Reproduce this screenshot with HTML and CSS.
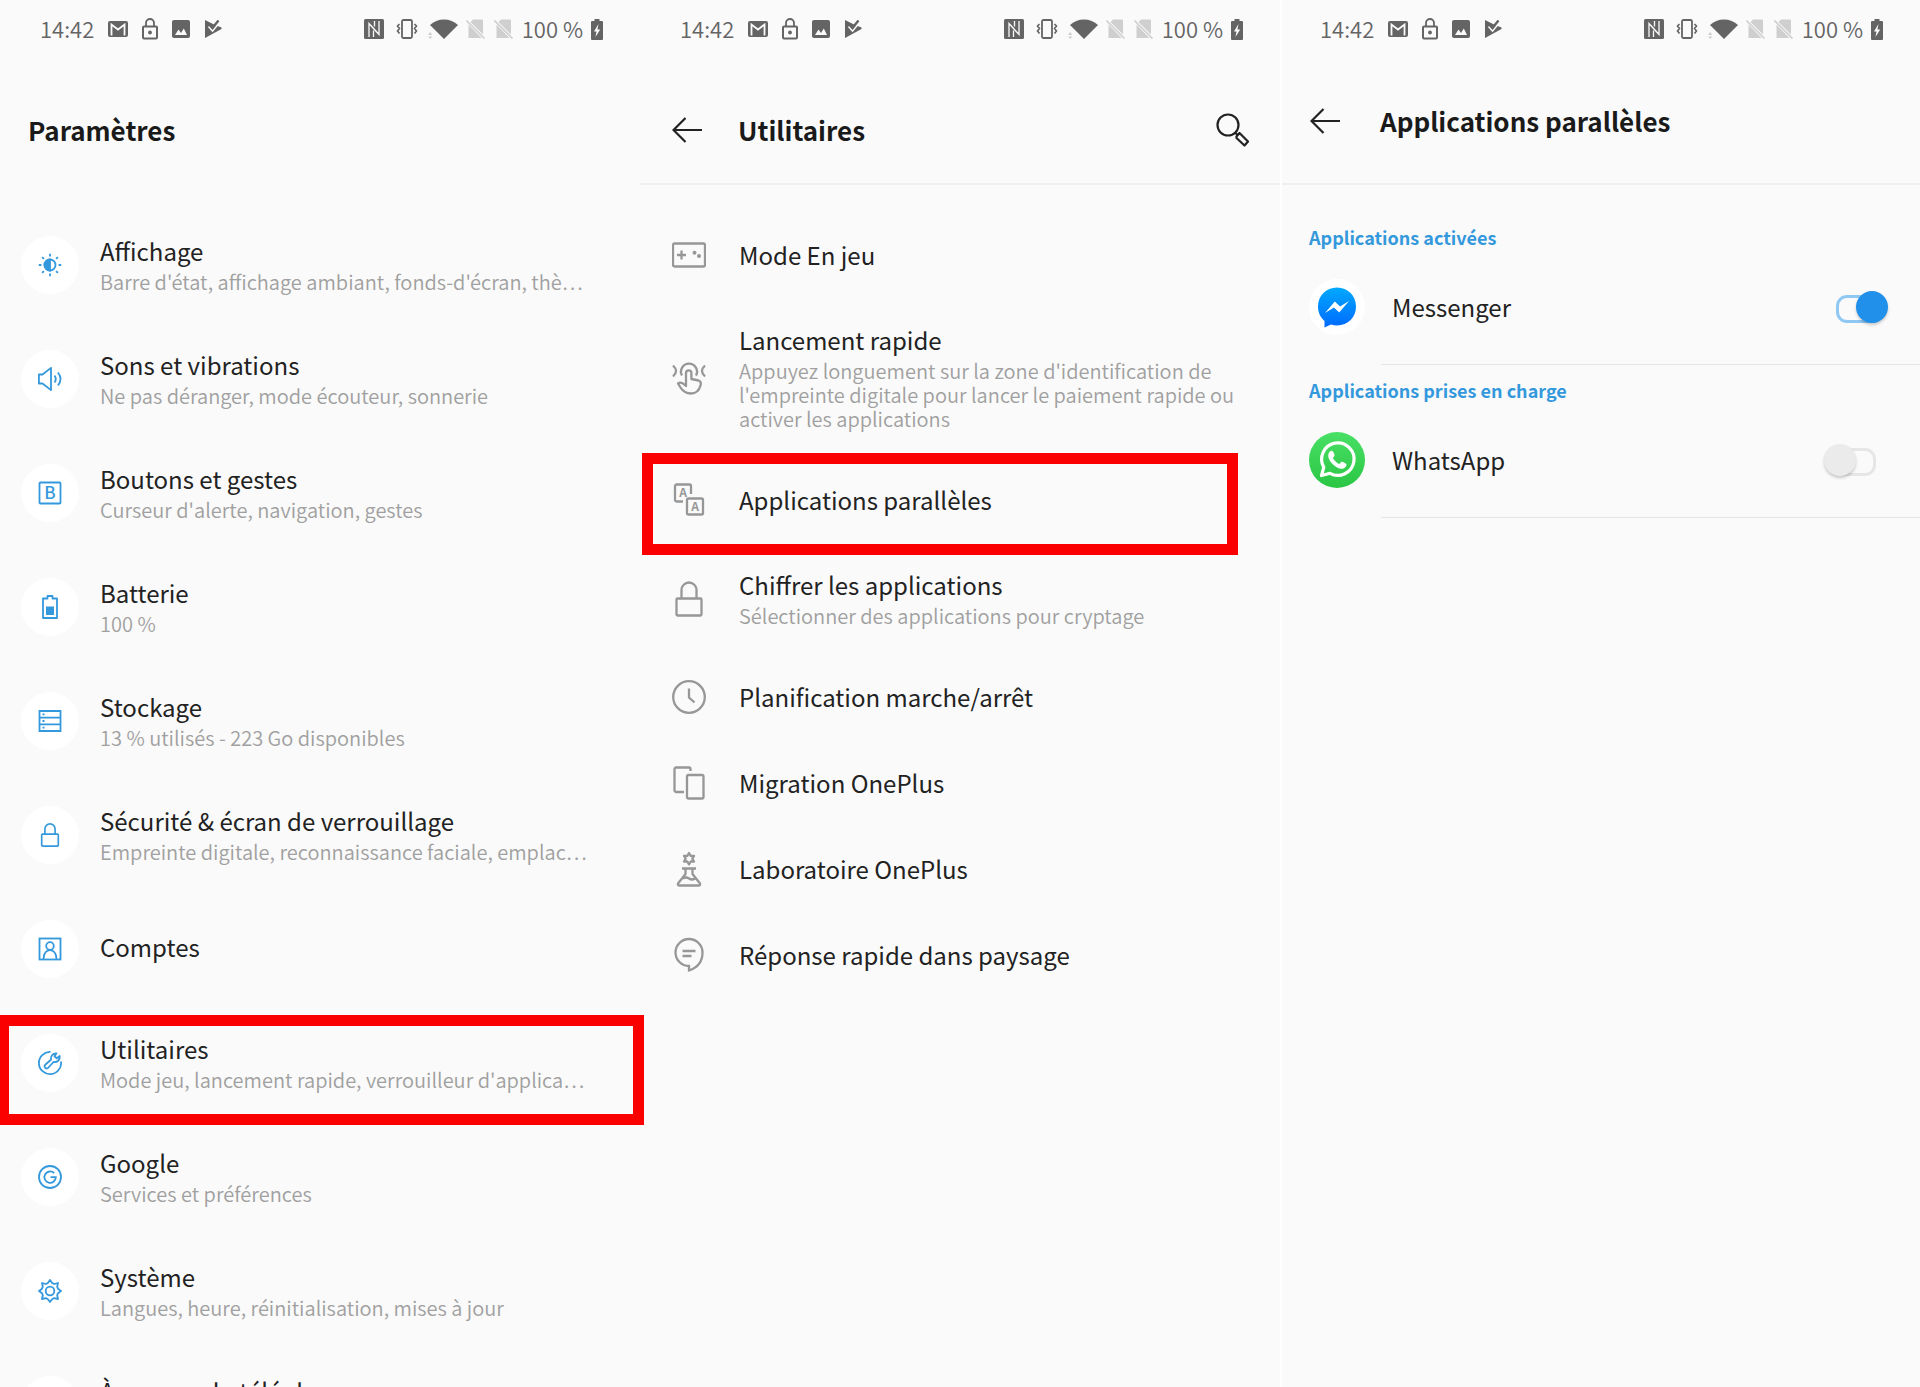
FILE: index.html
```html
<!DOCTYPE html>
<html lang="fr">
<head>
<meta charset="utf-8">
<meta name="viewport" content="width=device-width, initial-scale=1">
<title>Applications parallèles</title>
<link rel="stylesheet" href="styles.css">
</head>
<body>
<svg class="sprite" aria-hidden="true">
  <symbol id="s-mail" viewBox="0 0 20 16"><rect width="20" height="16" rx="2" fill="currentColor"/><path d="M3.500 14.500V3.500L10 8.500L16.500 3.500V14.500" fill="none" stroke="#fafafa" stroke-width="1.800"/></symbol>
  <symbol id="s-lock" viewBox="0 0 16 22"><rect x="1" y="8.500" width="14" height="12" rx="1" fill="none" stroke="currentColor" stroke-width="2"/><path d="M4 8V5a4 4 0 0 1 8 0v3" fill="none" stroke="currentColor" stroke-width="1.800"/><circle cx="8" cy="14.500" r="1.900" fill="currentColor"/></symbol>
  <symbol id="s-image" viewBox="0 0 18 18"><rect width="18" height="18" rx="2" fill="currentColor"/><path d="M3 15L6.500 9.500L9 13L11.800 8.500L15 15Z" fill="#fafafa"/></symbol>
  <symbol id="s-play" viewBox="0 0 18 20"><path d="M1 1L11 6L17.500 8.500V10L1 19Z" fill="currentColor"/><path d="M4.500 7.500L8.500 12L16.500 2.500" fill="none" stroke="#fafafa" stroke-width="1.600"/><path d="M5 5L8.500 8.800L14.500 1.500" fill="none" stroke="currentColor" stroke-width="2.400"/></symbol>
  <symbol id="s-nfc" viewBox="0 0 24 20"><rect width="20" height="20" rx="1.500" fill="currentColor"/><path d="M5 18V4.500L14 14.500M15 2V15.500L6.500 6M9.500 11.500v6.500M10.500 2v5.500" fill="none" stroke="#fafafa" stroke-width="1.300"/></symbol>
  <symbol id="s-vibrate" viewBox="0 0 24 20"><rect x="6" y="1" width="10" height="18" rx="1.500" fill="none" stroke="currentColor" stroke-width="1.800"/><path d="M3.500 5L1.500 7L3.500 9.500L1.500 12L3.500 14.500M18.500 5L20.500 7L18.500 9.500L20.500 12L18.500 14.500" fill="none" stroke="currentColor" stroke-width="1.600"/></symbol>
  <symbol id="s-wifi" viewBox="0 0 30 20"><path d="M2 6C9-1.500 23-1.500 30 6L16 20Z" fill="currentColor"/><path d="M0 16L2.200 13L4.400 16ZM0 17.500H4.400L2.200 20Z" fill="#d0d0d0"/></symbol>
  <symbol id="s-sim" viewBox="0 0 20 20"><path d="M7 .5H16a1 1 0 0 1 1 1V15.500L4.500 3ZM2.500 5.500L15.500 19H2.500Z" fill="#cfcfcf"/><path d="M.5 1.500L18.500 19.500" stroke="#cfcfcf" stroke-width="1.600"/></symbol>
  <symbol id="s-battery" viewBox="0 0 12 21"><path d="M3.500 0h5v2H11a1 1 0 0 1 1 1V20a1 1 0 0 1-1 1H1a1 1 0 0 1-1-1V3a1 1 0 0 1 1-1H3.500Z" fill="currentColor"/><path d="M7.500 5L3 12.500H5.500L4.500 18L9.200 10.500H6.500Z" fill="#fafafa"/></symbol>

  <symbol id="i-back" viewBox="0 0 30 28"><path d="M30 14H2M13.500 2L1.500 14L13.500 26" fill="none" stroke="currentColor" stroke-width="2.200"/></symbol>
  <symbol id="i-search" viewBox="0 0 34 34"><g fill="none" stroke="currentColor" stroke-width="2.200"><circle cx="12" cy="12" r="10.500"/><path d="M19 19.500L21 21.500M20.500 23.500L23.500 20L32 28.500L28.500 32.500L20.500 25Z" stroke-linejoin="round"/></g></symbol>

  <symbol id="i-display" viewBox="0 0 24 24"><circle cx="12" cy="12" r="5.500"/><path d="M12 6.500a5.500 5.500 0 0 0 0 11Z" fill="currentColor"/><path d="M12 .8v2.600M12 20.600v2.600M.8 12h2.600M20.600 12h2.600M4.100 4.100l1.800 1.800M18.100 18.100l1.800 1.800M4.100 19.900l1.800-1.800M18.100 5.900l1.800-1.800"/></symbol>
  <symbol id="i-sound" viewBox="0 0 24 24"><path d="M.9 7.500H4.500L13 .9V23.100L4.500 16.500H.9Z" stroke-linejoin="round"/><path d="M16.500 8.500q2.600 3.500 0 7M20 5.500q5 6.500 0 13"/></symbol>
  <symbol id="i-charge" viewBox="0 0 24 24"><path d="M9.500 1h5v2.500H19V23H5V3.500H9.500Z" stroke-linejoin="round"/><rect x="8" y="11.500" width="8" height="8.500" fill="currentColor" stroke="none"/></symbol>
  <symbol id="i-storage" viewBox="0 0 24 24"><path d="M1.500 2h21v20h-21ZM1.500 8.700h21M1.500 15.300h21"/><path d="M4.500 5.300h2M4.500 12h2M4.500 18.700h2"/></symbol>
  <symbol id="i-padlock" viewBox="0 0 24 26"><rect x="3" y="12" width="18" height="13" rx="1"/><path d="M6.500 12V6.500a5.500 5.500 0 0 1 11 0V12"/></symbol>
  <symbol id="i-account" viewBox="0 0 24 24"><rect x="1.500" y="1.500" width="21" height="21"/><circle cx="12" cy="9" r="3.800"/><path d="M5.500 22c0-12 13-12 13 0"/></symbol>
  <symbol id="i-tools" viewBox="0 0 24 24"><path d="M12.500 .9A11.100 11.100 0 1 0 23 10.500"/><path d="M7.200 16.800C6 15.500 6.500 14.300 7.500 13.500L13 8.800C12.300 5.500 14.500 2 18.500 2.300L16.500 5.200L18.800 7.200L21.700 5C22.500 9 19 11.700 15.500 11L10.500 16.500C9.500 17.700 8.200 17.800 7.200 16.800Z" stroke-linejoin="round"/></symbol>
  <symbol id="i-google" viewBox="0 0 24 24"><circle cx="12" cy="12" r="11"/><path d="M16.200 8.200A5.700 5.700 0 1 0 17.800 12.200H12.500"/></symbol>
  <symbol id="i-gear" viewBox="0 0 24 24"><circle cx="12" cy="12" r="4.300"/><path d="M12 1L14.300 4.200L16.200 5L20 4L19.200 7.900L20 9.700L23 12L20 14.300L19.200 16.200L20 20L16.200 19.200L14.300 20L12 23L9.700 20L7.800 19.200L4 20L4.800 16.200L4 14.300L1 12L4 9.700L4.800 7.900L4 4L7.800 5L9.700 4.200Z" stroke-linejoin="round"/></symbol>
  <symbol id="i-phone" viewBox="0 0 24 24"><rect x="5" y="1.500" width="14" height="21" rx="2"/></symbol>

  <symbol id="i-game" viewBox="0 0 34 34"><rect x="1" y="5.500" width="32" height="23" rx="1.500"/><path d="M5 17h9M9.500 12.500v9"/><g fill="currentColor" stroke="none"><circle cx="22.500" cy="14.800" r="2"/><circle cx="27" cy="18" r="2"/></g></symbol>
  <symbol id="i-touch" viewBox="0 0 34 34"><path d="M10 14.500A8 8 0 1 1 24 14.500M1 4.500q6 5.500 0 11M33 4.500q-6 5.500 0 11"/><path d="M14 23V12a2.700 2.700 0 0 1 5.400 0V18L26.500 19.500C29 20.200 29.200 22 28.500 24.500C27 30 23.500 32.500 19 32.500C13.500 32.500 11 30.500 8.500 26.500L6 22.500C8.500 20.500 11 22 14 25Z" stroke-linejoin="round"/></symbol>
  <symbol id="i-encrypt" viewBox="0 0 34 36"><rect x="4.500" y="17.500" width="25" height="17" rx="1"/><path d="M9.500 17.500V9a7.500 7.500 0 0 1 15 0V17.500"/></symbol>
  <symbol id="i-clock" viewBox="0 0 34 34"><circle cx="17" cy="17" r="15.800"/><path d="M17 8.500V17.500L22.500 22.500"/></symbol>
  <symbol id="i-migrate" viewBox="0 0 34 34"><path d="M12 26H4a1.500 1.500 0 0 1-1.500-1.500V3A1.500 1.500 0 0 1 4 1.500H17A1.500 1.500 0 0 1 18.500 3V5"/><rect x="15" y="9" width="16.500" height="23.500" rx="1.500"/></symbol>
  <symbol id="i-lab" viewBox="0 0 34 36"><path d="M17 2L18.700 4.800H22L20.300 7.700L22 10.500H18.700L17 13.300L15.300 10.500H12L13.700 7.700L12 4.800H15.300ZM10 17.500H24M13.500 17.500V23L6 32.500Q5.500 34.500 7.500 34.500H26.500Q28.500 34.500 28 32.500L20.500 23V17.500M11 27.500Q14 25.500 17 27.500T23 27.500" stroke-linejoin="round"/></symbol>
  <symbol id="i-reply" viewBox="0 0 34 34"><path d="M17 28A13.500 13.500 0 1 1 30.500 14.500C30.500 23 26 29.500 17 32.500Z" stroke-linejoin="miter"/><path d="M10.500 13H23.500M10.500 18H19.500"/></symbol>

  <linearGradient id="gm" x1="0" y1="0" x2="0" y2="1"><stop offset="0" stop-color="#00a9fe"/><stop offset="1" stop-color="#006aff"/></linearGradient>
  <linearGradient id="gw" x1="0" y1="0" x2="0" y2="1"><stop offset="0" stop-color="#48e065"/><stop offset="1" stop-color="#2bc644"/></linearGradient>
  <symbol id="logo-messenger" viewBox="0 0 56 56"><circle cx="28" cy="28" r="28" fill="#fff"/><path d="M28 8.500C17 8.500 9 16.800 9 27.500C9 33.500 11.500 38.500 15.500 42V48.500L22 45.500C24 46.100 26 46.400 28 46.400C39 46.400 47 38.200 47 27.500C47 16.800 39 8.500 28 8.500Z" fill="url(#gm)"/><path d="M16 34L25.800 22.500L31 27.500L40 22L30.200 33.500L25 28.500Z" fill="#fff"/></symbol>
  <symbol id="logo-whatsapp" viewBox="0 0 56 56"><circle cx="28" cy="28" r="28" fill="url(#gw)"/><path d="M12.500 43.500L14.800 35.200A16.200 16.200 0 1 1 21 41.300Z" fill="none" stroke="#fff" stroke-width="3.200" stroke-linejoin="round"/><path d="M22.500 18.800C21.500 18.800 19.200 20.500 19.200 23.800C19.200 29 27 36.800 32.500 36.800C35.500 36.800 37.500 34.500 37.500 32.500C37.500 31.500 33.500 29.800 32.800 29.800C32 29.800 31 32 30.200 32C29 32 24 27.500 24 26C24 25.200 25.600 24.200 25.600 23.200C25.600 22.500 24.300 18.800 22.500 18.800Z" fill="#fff"/></symbol>
</svg>

<main class="screens">
  <section class="screen screen--settings" aria-labelledby="t-settings">
    <div class="status">
      <span class="status__time">14:42</span>
      <svg class="status__mail"><use href="#s-mail"/></svg>
      <svg class="status__lock"><use href="#s-lock"/></svg>
      <svg class="status__image"><use href="#s-image"/></svg>
      <svg class="status__play"><use href="#s-play"/></svg>
      <div class="status__right">
        <svg class="status__wide"><use href="#s-nfc"/></svg>
        <svg class="status__wide"><use href="#s-vibrate"/></svg>
        <svg class="status__wifi"><use href="#s-wifi"/></svg>
        <svg class="status__sim"><use href="#s-sim"/></svg>
        <svg class="status__sim"><use href="#s-sim"/></svg>
        <span class="status__level">100 %</span>
        <svg class="status__battery"><use href="#s-battery"/></svg>
      </div>
    </div>
    <header class="bar bar--low">
      <h1 class="bar__title" id="t-settings">Paramètres</h1>
    </header>
    <nav class="list list--settings">
      <a class="row" href="#"><span class="row__badge"><svg><use href="#i-display"/></svg></span><span class="row__text"><span class="row__title">Affichage</span><span class="row__sub">Barre d'état, affichage ambiant, fonds-d'écran, thè…</span></span></a>
      <a class="row" href="#"><span class="row__badge"><svg><use href="#i-sound"/></svg></span><span class="row__text"><span class="row__title">Sons et vibrations</span><span class="row__sub">Ne pas déranger, mode écouteur, sonnerie</span></span></a>
      <a class="row" href="#"><span class="row__badge"><svg viewBox="0 0 24 24"><rect x="1.500" y="1.500" width="21" height="21" rx="1"/><text x="12" y="18" class="glyph glyph--b">B</text></svg></span><span class="row__text"><span class="row__title">Boutons et gestes</span><span class="row__sub">Curseur d'alerte, navigation, gestes</span></span></a>
      <a class="row" href="#"><span class="row__badge"><svg><use href="#i-charge"/></svg></span><span class="row__text"><span class="row__title">Batterie</span><span class="row__sub">100 %</span></span></a>
      <a class="row" href="#"><span class="row__badge"><svg><use href="#i-storage"/></svg></span><span class="row__text"><span class="row__title">Stockage</span><span class="row__sub">13 % utilisés - 223 Go disponibles</span></span></a>
      <a class="row" href="#"><span class="row__badge"><svg><use href="#i-padlock"/></svg></span><span class="row__text"><span class="row__title">Sécurité &amp; écran de verrouillage</span><span class="row__sub">Empreinte digitale, reconnaissance faciale, emplac…</span></span></a>
      <a class="row" href="#"><span class="row__badge"><svg><use href="#i-account"/></svg></span><span class="row__text"><span class="row__title">Comptes</span></span></a>
      <a class="row row--marked" href="#"><span class="row__badge"><svg><use href="#i-tools"/></svg></span><span class="row__text"><span class="row__title">Utilitaires</span><span class="row__sub">Mode jeu, lancement rapide, verrouilleur d'applica…</span></span></a>
      <a class="row" href="#"><span class="row__badge"><svg><use href="#i-google"/></svg></span><span class="row__text"><span class="row__title">Google</span><span class="row__sub">Services et préférences</span></span></a>
      <a class="row" href="#"><span class="row__badge"><svg><use href="#i-gear"/></svg></span><span class="row__text"><span class="row__title">Système</span><span class="row__sub">Langues, heure, réinitialisation, mises à jour</span></span></a>
      <a class="row" href="#"><span class="row__badge"><svg><use href="#i-phone"/></svg></span><span class="row__text"><span class="row__title">À propos du téléphone</span><span class="row__sub">OnePlus</span></span></a>
    </nav>
  </section>

  <section class="screen screen--tools" aria-labelledby="t-tools">
    <div class="status">
      <span class="status__time">14:42</span>
      <svg class="status__mail"><use href="#s-mail"/></svg>
      <svg class="status__lock"><use href="#s-lock"/></svg>
      <svg class="status__image"><use href="#s-image"/></svg>
      <svg class="status__play"><use href="#s-play"/></svg>
      <div class="status__right">
        <svg class="status__wide"><use href="#s-nfc"/></svg>
        <svg class="status__wide"><use href="#s-vibrate"/></svg>
        <svg class="status__wifi"><use href="#s-wifi"/></svg>
        <svg class="status__sim"><use href="#s-sim"/></svg>
        <svg class="status__sim"><use href="#s-sim"/></svg>
        <span class="status__level">100 %</span>
        <svg class="status__battery"><use href="#s-battery"/></svg>
      </div>
    </div>
    <header class="bar bar--low bar--ruled">
      <button class="bar__back" type="button" aria-label="Retour"><svg><use href="#i-back"/></svg></button>
      <h1 class="bar__title" id="t-tools">Utilitaires</h1>
      <button class="bar__search" type="button" aria-label="Rechercher"><svg><use href="#i-search"/></svg></button>
    </header>
    <nav class="list list--tools">
      <a class="row" href="#"><svg class="row__icon"><use href="#i-game"/></svg><span class="row__text"><span class="row__title">Mode En jeu</span></span></a>
      <a class="row" href="#"><svg class="row__icon"><use href="#i-touch"/></svg><span class="row__text"><span class="row__title">Lancement rapide</span><span class="row__sub">Appuyez longuement sur la zone d'identification de l'empreinte digitale pour lancer le paiement rapide ou activer les applications</span></span></a>
      <a class="row row--marked" href="#"><svg class="row__icon" viewBox="0 0 34 34"><path d="M11 18.500H4.500a1.500 1.500 0 0 1-1.500-1.500V3a1.500 1.500 0 0 1 1.500-1.500H17.500A1.500 1.500 0 0 1 19 3V11"/><rect x="15" y="15.500" width="16" height="16" rx="1.500"/><text x="11" y="14" class="glyph glyph--a">A</text><text x="23" y="28" class="glyph glyph--a">A</text></svg><span class="row__text"><span class="row__title">Applications parallèles</span></span></a>
      <a class="row" href="#"><svg class="row__icon"><use href="#i-encrypt"/></svg><span class="row__text"><span class="row__title">Chiffrer les applications</span><span class="row__sub">Sélectionner des applications pour cryptage</span></span></a>
      <a class="row" href="#"><svg class="row__icon"><use href="#i-clock"/></svg><span class="row__text"><span class="row__title">Planification marche/arrêt</span></span></a>
      <a class="row" href="#"><svg class="row__icon"><use href="#i-migrate"/></svg><span class="row__text"><span class="row__title">Migration OnePlus</span></span></a>
      <a class="row" href="#"><svg class="row__icon"><use href="#i-lab"/></svg><span class="row__text"><span class="row__title">Laboratoire OnePlus</span></span></a>
      <a class="row" href="#"><svg class="row__icon"><use href="#i-reply"/></svg><span class="row__text"><span class="row__title">Réponse rapide dans paysage</span></span></a>
    </nav>
  </section>

  <section class="screen screen--apps" aria-labelledby="t-apps">
    <div class="status">
      <span class="status__time">14:42</span>
      <svg class="status__mail"><use href="#s-mail"/></svg>
      <svg class="status__lock"><use href="#s-lock"/></svg>
      <svg class="status__image"><use href="#s-image"/></svg>
      <svg class="status__play"><use href="#s-play"/></svg>
      <div class="status__right">
        <svg class="status__wide"><use href="#s-nfc"/></svg>
        <svg class="status__wide"><use href="#s-vibrate"/></svg>
        <svg class="status__wifi"><use href="#s-wifi"/></svg>
        <svg class="status__sim"><use href="#s-sim"/></svg>
        <svg class="status__sim"><use href="#s-sim"/></svg>
        <span class="status__level">100 %</span>
        <svg class="status__battery"><use href="#s-battery"/></svg>
      </div>
    </div>
    <header class="bar bar--ruled">
      <button class="bar__back" type="button" aria-label="Retour"><svg><use href="#i-back"/></svg></button>
      <h1 class="bar__title" id="t-apps">Applications parallèles</h1>
    </header>
    <div class="apps">
      <h2 class="apps__heading">Applications activées</h2>
      <div class="app">
        <svg class="app__logo"><use href="#logo-messenger"/></svg>
        <label class="app__name" for="sw-messenger">Messenger</label>
        <input class="switch" type="checkbox" id="sw-messenger" checked>
      </div>
      <h2 class="apps__heading">Applications prises en charge</h2>
      <div class="app">
        <svg class="app__logo"><use href="#logo-whatsapp"/></svg>
        <label class="app__name" for="sw-whatsapp">WhatsApp</label>
        <input class="switch" type="checkbox" id="sw-whatsapp">
      </div>
    </div>
  </section>
</main>
</body>
</html>
```
FILE: styles.css
```css
:root {
  --bg: #fafafa;
  --ink: #222;
  --muted: #a0a0a0;
  --status: #646464;
  --rule: #efefef;
  --accent: #3398dc;
  --mark: #fb0000;
}

* { box-sizing: border-box; }

body {
  margin: 0;
  background: var(--bg);
  color: var(--ink);
  font-family: "Noto Sans CJK SC", "Noto Sans", sans-serif;
  font-size: 24px;
}

svg { display: block; flex: none; }
.sprite { position: absolute; width: 0; height: 0; }
button { border: 0; padding: 0; background: none; color: inherit; font: inherit; }

.screens {
  display: grid;
  grid-template-columns: repeat(3, minmax(0, 1fr));
  height: 100vh;
  overflow: hidden;
}

.screen--apps { border-left: 2px solid #fff; }

/* Status bar */
.status {
  display: flex;
  align-items: center;
  gap: 14px;
  height: 58px;
  padding: 0 37px 0 40px;
  color: var(--status);
  font-size: 22px;
  font-weight: 350;
  line-height: 28px;
}
.screen--apps .status { padding-left: 38px; }
.status__time,
.status__level { padding-bottom: 3px; white-space: nowrap; }
.status__mail { width: 20px; height: 16px; }
.status__lock { width: 16px; height: 22px; }
.status__image { width: 18px; height: 18px; }
.status__play { width: 18px; height: 20px; }
.status__right { display: flex; align-items: center; gap: 8px; margin-left: auto; }
.status__wide { width: 24px; height: 20px; }
.status__wifi { width: 30px; height: 20px; }
.status__sim { width: 20px; height: 20px; }
.status__battery { width: 12px; height: 21px; }

/* Title bar */
.bar {
  display: flex;
  align-items: center;
  height: 127px;
  padding: 0 30px 0 28px;
  border-bottom: 2px solid transparent;
}
.bar--low { padding-top: 18px; }
.bar--ruled { border-color: var(--rule); }
.bar__title { margin: 0; font-size: 26px; font-weight: 700; line-height: 36px; color: #1a1a1a; }
.bar__back { margin-right: 40px; }
.bar__back svg { width: 30px; height: 28px; }
.bar__search { margin-left: auto; }
.bar__search svg { width: 34px; height: 34px; }
.screen--tools .bar { padding-left: 32px; }
.screen--tools .bar__back { margin-right: 36px; }

/* Rows */
.list--settings { padding-top: 23px; }
.list--tools { padding-top: 27px; }

.row {
  position: relative;
  display: flex;
  align-items: center;
  color: inherit;
  text-decoration: none;
}
.row__title { display: block; line-height: 36px; }
.row__sub { display: block; margin-top: 1px; color: var(--muted); font-size: 20px; font-weight: 350; line-height: 24px; }

.list--settings .row { height: 114px; padding: 0 40px 0 21px; gap: 21px; }
.list--settings .row__text { padding-bottom: 4px; white-space: nowrap; }
.row__badge {
  display: grid;
  place-items: center;
  flex: none;
  width: 58px;
  height: 58px;
  border-radius: 50%;
  background: #fff;
}
.row__badge svg { width: 24px; height: 24px; color: var(--accent); fill: none; stroke: currentColor; stroke-width: 1.8; }

.list--tools .row { min-height: 86px; padding: 0 30px 0 32px; gap: 33px; }
.list--tools .row__text { padding: 24px 0 26px; }
.list--tools .row__text:has(:only-child) { padding: 25px 0; }
.row__icon { width: 34px; height: 36px; color: #979797; fill: none; stroke: currentColor; stroke-width: 2.3; }

.glyph { fill: currentColor; stroke: none; text-anchor: middle; font-family: "Noto Sans CJK SC", sans-serif; }
.glyph--b { font-size: 17px; font-weight: 500; }
.glyph--a { font-size: 12px; font-weight: 700; }

/* Red frame around the row to tap */
.row--marked::after {
  content: "";
  position: absolute;
  z-index: 1;
  border: 11px solid var(--mark);
  pointer-events: none;
}
.list--settings .row--marked::after { inset: 9px -4px -5px -2px; }
.list--tools .row--marked::after { inset: -4px 42px -12px 2px; }

/* Parallel apps */
.apps { padding-top: 27px; }
.apps__heading {
  margin: 11px 0 0 27px;
  color: var(--accent);
  font-size: 18px;
  font-weight: 700;
  line-height: 28px;
}
.app {
  position: relative;
  display: flex;
  align-items: center;
  height: 114px;
  padding: 0 32px 3px 27px;
}
.app::after {
  content: "";
  position: absolute;
  right: 0;
  bottom: 0;
  left: 99px;
  height: 1px;
  background: #e6e6e6;
}
.app__logo { width: 56px; height: 56px; margin-right: 27px; }
.app__name { flex: 1; line-height: 36px; }

.switch {
  appearance: none;
  position: relative;
  width: 52px;
  height: 32px;
  margin: 0 12px 0 0;
}
.switch::before,
.switch::after { content: ""; position: absolute; }
.switch::before {
  top: 4px;
  right: 0;
  width: 42px;
  height: 22px;
  border: 3px solid #e6e6e6;
  border-radius: 11px;
}
.switch::after {
  top: 0;
  left: 0;
  width: 32px;
  height: 32px;
  border-radius: 50%;
  background: #ebebeb;
  box-shadow: 0 2px 3px rgb(0 0 0 / 20%);
}
.switch:checked { margin-right: 0; }
.switch:checked::before { right: auto; left: 0; border-color: #90c8f4; }
.switch:checked::after { right: 0; left: auto; background: #2190ea; }
```
